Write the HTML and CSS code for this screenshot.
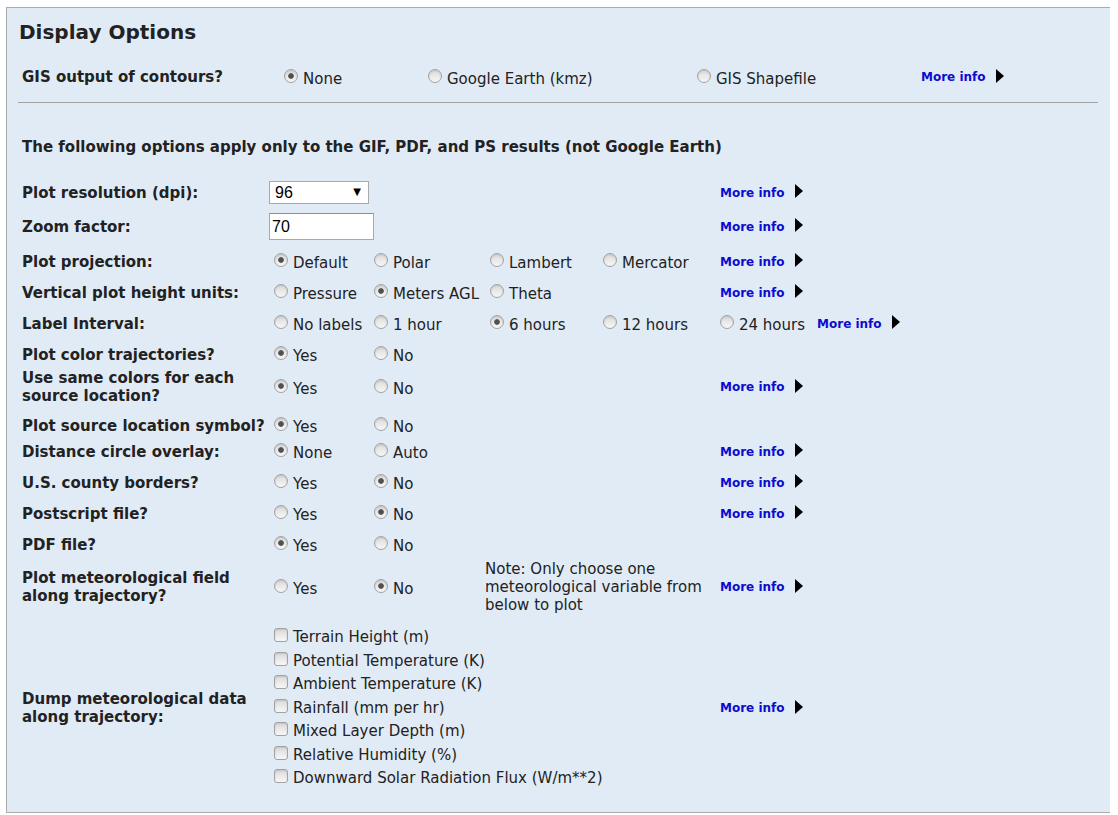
FILE: index.html
```html
<!DOCTYPE html>
<html>
<head>
<meta charset="utf-8">
<link rel="stylesheet" href="styles.css">
</head>
<body>
<div class="panel">
  <h2 class="title">Display Options</h2>

  <div class="gis">
    <div class="lbl">GIS output of contours?</div>
    <label class="opt"><input type="radio" name="gis" checked><span>None</span></label>
    <label class="opt"><input type="radio" name="gis"><span>Google Earth (kmz)</span></label>
    <label class="opt"><input type="radio" name="gis"><span>GIS Shapefile</span></label>
    <a class="more" href="#">More info<svg class="tri" width="8" height="14" viewBox="0 0 8 14"><polygon points="0,0 8,7 0,14"/></svg></a>
  </div>

  <hr class="sep">

  <p class="intro">The following options apply only to the GIF, PDF, and PS results (not Google Earth)</p>

  <div class="rows">
    <div class="row pb9">
      <div class="lbl">Plot resolution (dpi):</div>
      <div class="selwrap"><select class="sel"><option>96</option></select><span class="arrow">▼</span></div>
      <a class="more" href="#">More info<svg class="tri" width="8" height="14" viewBox="0 0 8 14"><polygon points="0,0 8,7 0,14"/></svg></a>
    </div>

    <div class="row pb11">
      <div class="lbl">Zoom factor:</div>
      <div class="inwrap"><input class="txt" type="text" value="70"></div>
      <a class="more" href="#">More info<svg class="tri" width="8" height="14" viewBox="0 0 8 14"><polygon points="0,0 8,7 0,14"/></svg></a>
    </div>

    <div class="row">
      <div class="lbl">Plot projection:</div>
      <label class="opt"><input type="radio" name="proj" checked><span>Default</span></label>
      <label class="opt"><input type="radio" name="proj"><span>Polar</span></label>
      <label class="opt"><input type="radio" name="proj"><span>Lambert</span></label>
      <label class="opt"><input type="radio" name="proj"><span>Mercator</span></label>
      <a class="more" href="#">More info<svg class="tri" width="8" height="14" viewBox="0 0 8 14"><polygon points="0,0 8,7 0,14"/></svg></a>
    </div>

    <div class="row">
      <div class="lbl">Vertical plot height units:</div>
      <label class="opt"><input type="radio" name="vert"><span>Pressure</span></label>
      <label class="opt"><input type="radio" name="vert" checked><span>Meters AGL</span></label>
      <label class="opt"><input type="radio" name="vert"><span>Theta</span></label>
      <a class="more" href="#">More info<svg class="tri" width="8" height="14" viewBox="0 0 8 14"><polygon points="0,0 8,7 0,14"/></svg></a>
    </div>

    <div class="row">
      <div class="lbl">Label Interval:</div>
      <label class="opt"><input type="radio" name="li"><span>No labels</span></label>
      <label class="opt"><input type="radio" name="li"><span>1 hour</span></label>
      <label class="opt"><input type="radio" name="li" checked><span>6 hours</span></label>
      <label class="opt"><input type="radio" name="li"><span>12 hours</span></label>
      <div class="last">
        <label class="opt"><input type="radio" name="li"><span>24 hours</span></label>
        <a class="more" href="#">More info<svg class="tri" width="8" height="14" viewBox="0 0 8 14"><polygon points="0,0 8,7 0,14"/></svg></a>
      </div>
    </div>

    <div class="row pb4">
      <div class="lbl">Plot color trajectories?</div>
      <label class="opt"><input type="radio" name="pc" checked><span>Yes</span></label>
      <label class="opt"><input type="radio" name="pc"><span>No</span></label>
    </div>

    <div class="row">
      <div class="lbl">Use same colors for each<br>source location?</div>
      <label class="opt"><input type="radio" name="sc" checked><span>Yes</span></label>
      <label class="opt"><input type="radio" name="sc"><span>No</span></label>
      <a class="more" href="#">More info<svg class="tri" width="8" height="14" viewBox="0 0 8 14"><polygon points="0,0 8,7 0,14"/></svg></a>
    </div>

    <div class="row pb5">
      <div class="lbl">Plot source location symbol?</div>
      <label class="opt"><input type="radio" name="ps" checked><span>Yes</span></label>
      <label class="opt"><input type="radio" name="ps"><span>No</span></label>
    </div>

    <div class="row">
      <div class="lbl">Distance circle overlay:</div>
      <label class="opt"><input type="radio" name="dc" checked><span>None</span></label>
      <label class="opt"><input type="radio" name="dc"><span>Auto</span></label>
      <a class="more" href="#">More info<svg class="tri" width="8" height="14" viewBox="0 0 8 14"><polygon points="0,0 8,7 0,14"/></svg></a>
    </div>

    <div class="row">
      <div class="lbl">U.S. county borders?</div>
      <label class="opt"><input type="radio" name="cb"><span>Yes</span></label>
      <label class="opt"><input type="radio" name="cb" checked><span>No</span></label>
      <a class="more" href="#">More info<svg class="tri" width="8" height="14" viewBox="0 0 8 14"><polygon points="0,0 8,7 0,14"/></svg></a>
    </div>

    <div class="row">
      <div class="lbl">Postscript file?</div>
      <label class="opt"><input type="radio" name="pf"><span>Yes</span></label>
      <label class="opt"><input type="radio" name="pf" checked><span>No</span></label>
      <a class="more" href="#">More info<svg class="tri" width="8" height="14" viewBox="0 0 8 14"><polygon points="0,0 8,7 0,14"/></svg></a>
    </div>

    <div class="row pb5">
      <div class="lbl">PDF file?</div>
      <label class="opt"><input type="radio" name="pdf" checked><span>Yes</span></label>
      <label class="opt"><input type="radio" name="pdf"><span>No</span></label>
    </div>

    <div class="row pb12">
      <div class="lbl">Plot meteorological field<br>along trajectory?</div>
      <label class="opt"><input type="radio" name="mf"><span>Yes</span></label>
      <label class="opt"><input type="radio" name="mf" checked><span>No</span></label>
      <div class="note">Note: Only choose one meteorological variable from below to plot</div>
      <a class="more" href="#">More info<svg class="tri" width="8" height="14" viewBox="0 0 8 14"><polygon points="0,0 8,7 0,14"/></svg></a>
    </div>

    <div class="row pb0">
      <div class="lbl">Dump meteorological data<br>along trajectory:</div>
      <div class="checks">
        <label class="chk"><input type="checkbox"><span>Terrain Height (m)</span></label>
        <label class="chk"><input type="checkbox"><span>Potential Temperature (K)</span></label>
        <label class="chk"><input type="checkbox"><span>Ambient Temperature (K)</span></label>
        <label class="chk"><input type="checkbox"><span>Rainfall (mm per hr)</span></label>
        <label class="chk"><input type="checkbox"><span>Mixed Layer Depth (m)</span></label>
        <label class="chk"><input type="checkbox"><span>Relative Humidity (%)</span></label>
        <label class="chk"><input type="checkbox"><span>Downward Solar Radiation Flux (W/m**2)</span></label>
      </div>
      <a class="more" href="#">More info<svg class="tri" width="8" height="14" viewBox="0 0 8 14"><polygon points="0,0 8,7 0,14"/></svg></a>
    </div>
  </div>
</div>
</body>
</html>
```

FILE: styles.css
```css
* { box-sizing: border-box; }

body {
  margin: 7px 8px 0 6px;
  background: #ffffff;
  font-family: "DejaVu Sans", Verdana, sans-serif;
  font-size: 15px;
  color: #222222;
}

.panel {
  width: 1105px;
  height: 806px;
  background: #e1ebf6;
  border: 1px solid #ababab;
  padding: 12px 12px 0 15px;
}

.title {
  margin: 0 0 0 -3px;
  font-size: 20px;
  line-height: 24px;
  font-weight: bold;
  color: #222222;
}

.lbl {
  font-weight: bold;
  line-height: 18px;
  white-space: nowrap;
  color: #222222;
}

.gis {
  margin-top: 18px;
  height: 30px;
  display: grid;
  grid-template-columns: 257px 144px 269px 229px 1fr;
  align-items: center;
}

.sep {
  margin: 10px 0 0 -4px;
  border: 0;
  border-top: 1px solid #a3a3a3;
  height: 0;
}

.intro {
  margin: 35px 0 25px 0;
  font-weight: bold;
  line-height: 18px;
}

.rows {
  display: flex;
  flex-direction: column;
}

.row {
  display: grid;
  grid-template-columns: 247px 100px 116px 113px 117px 1fr;
  align-items: center;
  padding-bottom: 10px;
}

.row.pb0 { padding-bottom: 0; }
.row.pb4 { padding-bottom: 4px; }
.row.pb5 { padding-bottom: 5px; }
.row.pb9 { padding-bottom: 9px; }
.row.pb11 { padding-bottom: 11px; }
.row.pb12 { padding-bottom: 12px; }

.row > .more { grid-column: 6 / 7; }

.opt {
  display: flex;
  align-items: flex-start;
  white-space: nowrap;
  line-height: 18px;
}

.opt span { padding-top: 3px; }

.opt input[type="radio"] {
  appearance: none;
  -webkit-appearance: none;
  width: 14px;
  height: 14px;
  margin: 2px 5px 0 5px;
  border: 1px solid #a2a2a2;
  border-radius: 50%;
  background: linear-gradient(180deg, #d9d9d9 0%, #e9e9e9 50%, #f7f7f7 100%);
  box-shadow: inset 0 1px 2px rgba(0,0,0,0.12);
  flex: none;
}

.opt input[type="radio"]:checked {
  background:
    radial-gradient(circle at 50% 50%, #505050 0, #505050 2.4px, rgba(80,80,80,0) 3.2px),
    linear-gradient(180deg, #d9d9d9 0%, #e9e9e9 50%, #f7f7f7 100%);
}

.last {
  grid-column: 6 / 7;
  display: flex;
  align-items: center;
}

.more {
  display: flex;
  align-items: center;
  padding-left: 5px;
  color: #0c0ccf;
  text-decoration: none;
  font-weight: bold;
  font-size: 12px;
  line-height: 16px;
  white-space: nowrap;
}

.gis .more { padding-left: 0; }

.last .more { padding-left: 12px; }

.tri {
  margin-left: 10px;
  margin-top: -3px;
  fill: #000000;
}

.selwrap {
  position: relative;
  width: 100px;
  height: 23px;
}

.sel {
  appearance: none;
  -webkit-appearance: none;
  width: 100px;
  height: 23px;
  margin: 0;
  padding: 0 0 0 5px;
  border: 1px solid #a9a9a9;
  border-radius: 0;
  background: #ffffff;
  font-family: "Liberation Sans", Arial, sans-serif;
  font-size: 16px;
  color: #000000;
}

.arrow {
  position: absolute;
  right: 8px;
  top: 5px;
  font-size: 10px;
  line-height: 12px;
  color: #000000;
  pointer-events: none;
}

.inwrap { grid-column: 2 / 4; }

.txt {
  width: 105px;
  height: 27px;
  margin: 0;
  padding: 0 2px;
  border: 1px solid #a9a9a9;
  border-top-color: #8f8f8f;
  background: #ffffff;
  font-family: "Liberation Sans", Arial, sans-serif;
  font-size: 16px;
  color: #000000;
}

.note {
  grid-column: 4 / 6;
  width: 229px;
  line-height: 18px;
  color: #222222;
}

.checks {
  grid-column: 2 / 6;
  display: flex;
  flex-direction: column;
}

.chk {
  display: flex;
  align-items: flex-start;
  line-height: 23.5px;
  white-space: nowrap;
}

.chk input[type="checkbox"] {
  appearance: none;
  -webkit-appearance: none;
  width: 14px;
  height: 14px;
  margin: 2px 5px 0 5px;
  border: 1px solid #a2a2a2;
  border-radius: 3px;
  background: linear-gradient(180deg, #d9d9d9 0%, #e9e9e9 50%, #f7f7f7 100%);
  box-shadow: inset 0 1px 2px rgba(0,0,0,0.12);
  flex: none;
}
```
